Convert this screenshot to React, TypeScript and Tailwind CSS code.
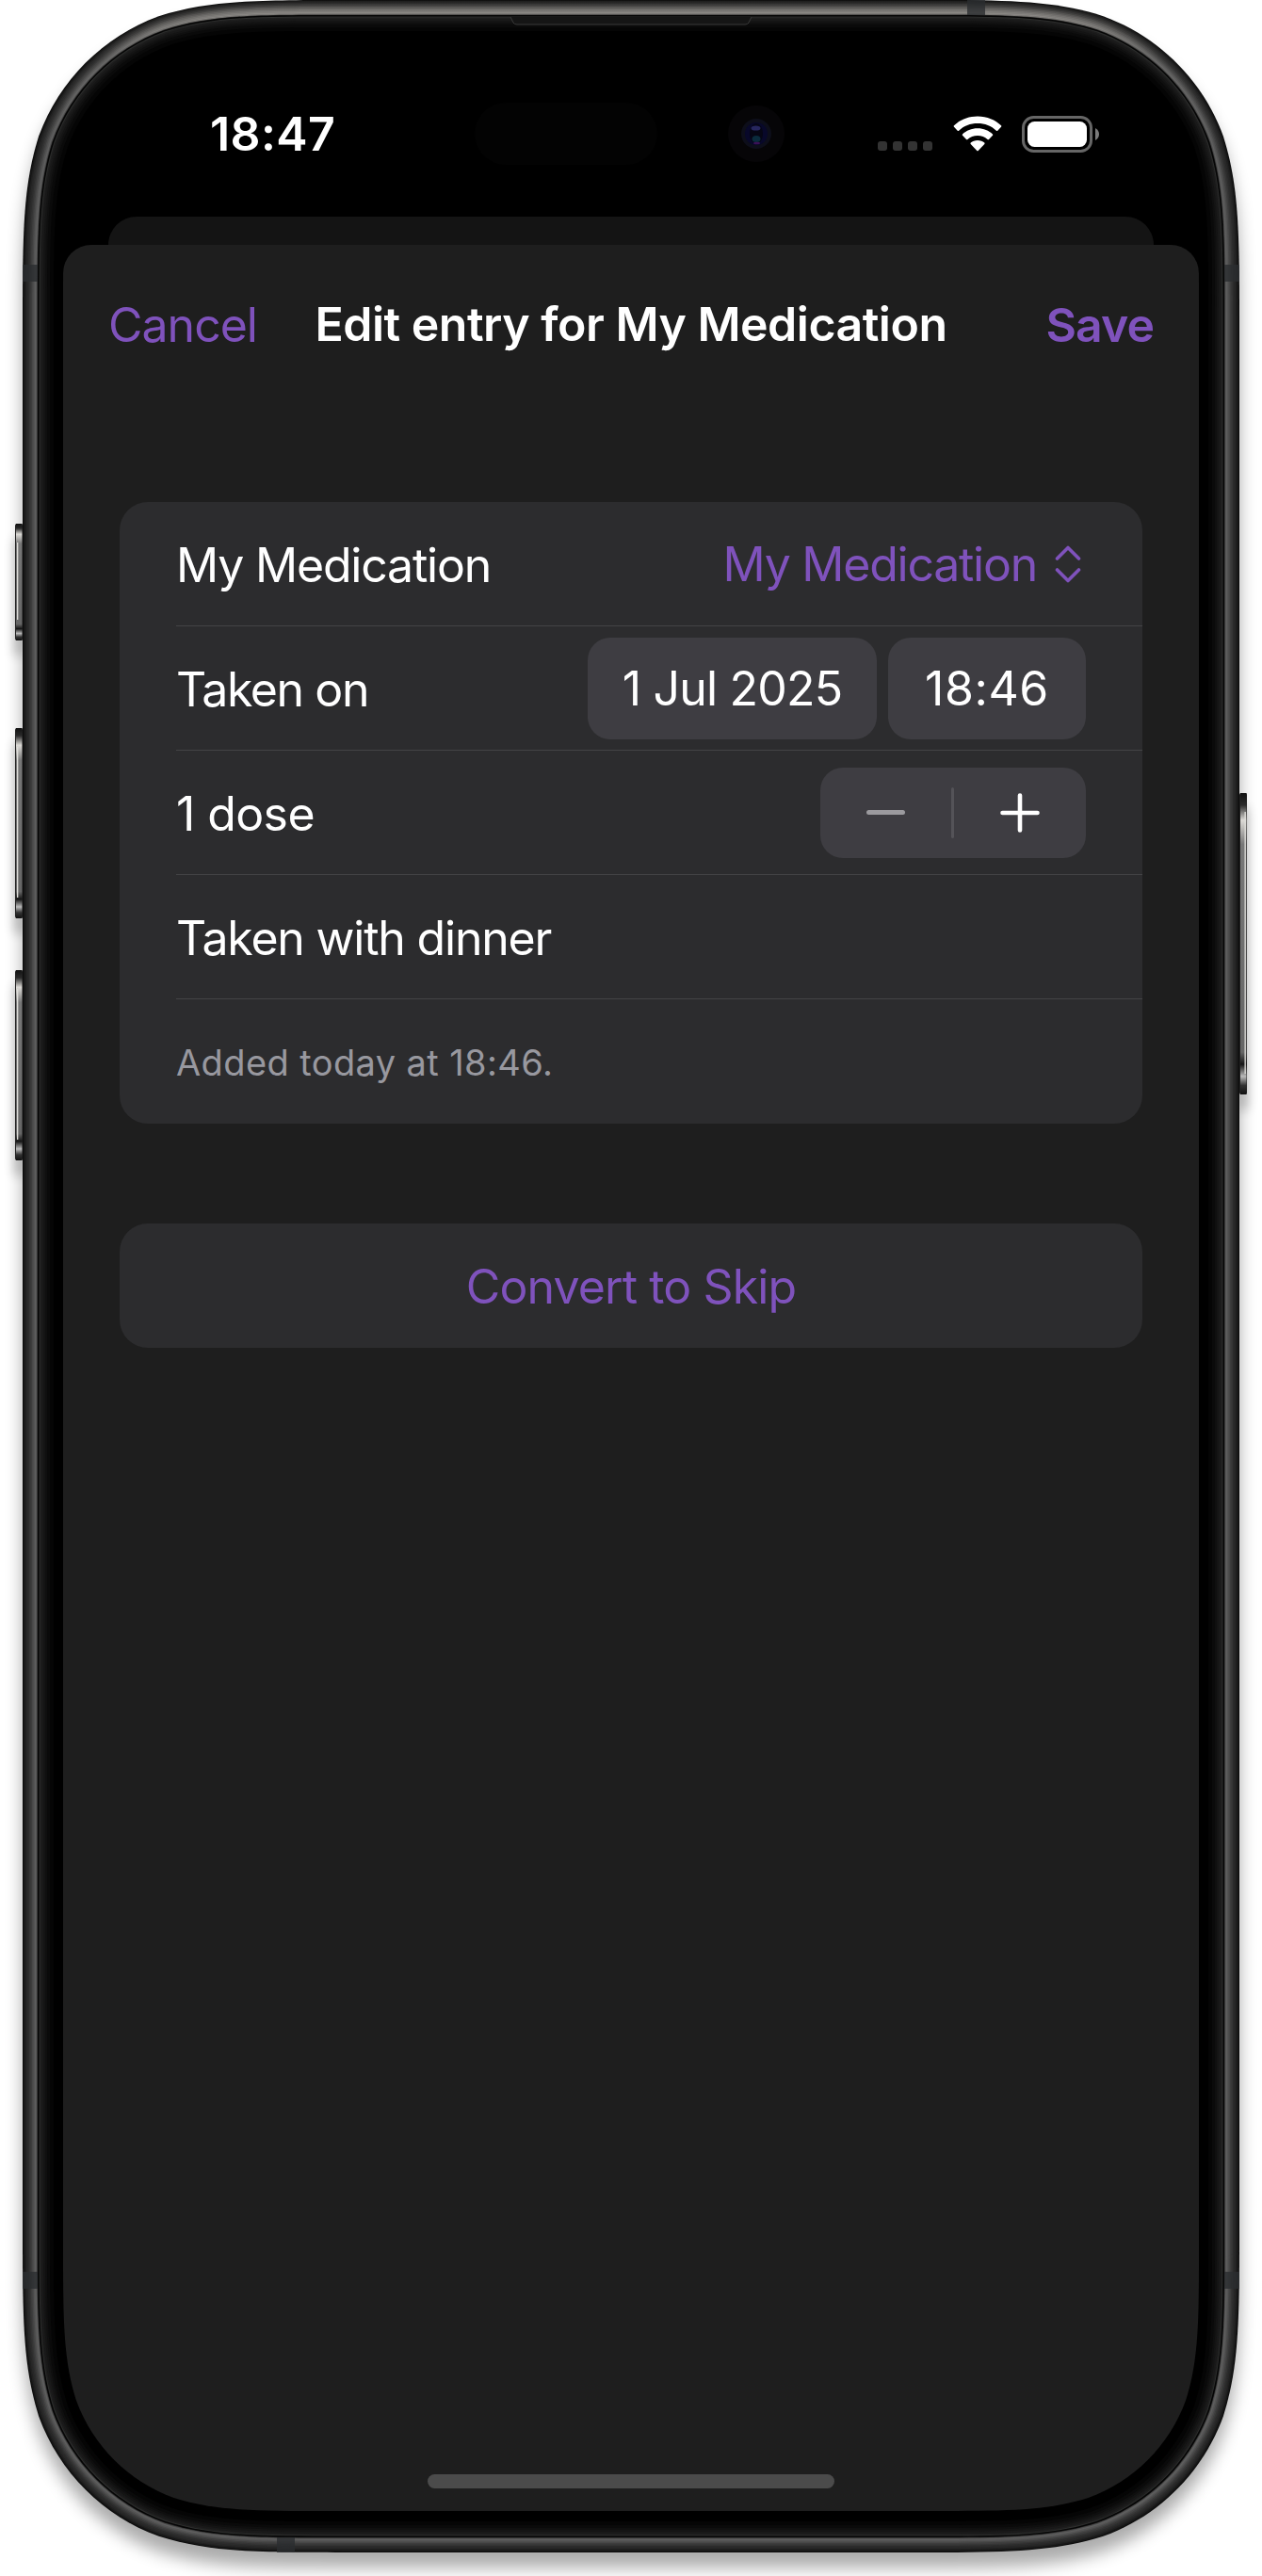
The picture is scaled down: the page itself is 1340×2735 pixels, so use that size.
import { useState } from "react";
import type { ReactNode } from "react";

// continuous ("squircle") rounded rectangle, as used by the device outline
const squircle = (x: number, y: number, w: number, h: number, r: number) => {
  const a = 1.52866498 * r;
  const b = 1.08849296 * r;
  const c = 0.86840694 * r;
  const d = 0.63149379 * r;
  const e = 0.07491139 * r;
  const f = 0.37282383 * r;
  const g = 0.16905956 * r;
  const R = x + w;
  const B = y + h;
  return [
    `M${x + a} ${y}L${R - a} ${y}`,
    `C${R - b} ${y} ${R - c} ${y} ${R - d} ${y + e}`,
    `C${R - f} ${y + g} ${R - g} ${y + f} ${R - e} ${y + d}`,
    `C${R} ${y + c} ${R} ${y + b} ${R} ${y + a}`,
    `L${R} ${B - a}`,
    `C${R} ${B - b} ${R} ${B - c} ${R - e} ${B - d}`,
    `C${R - g} ${B - f} ${R - f} ${B - g} ${R - d} ${B - e}`,
    `C${R - c} ${B} ${R - b} ${B} ${R - a} ${B}`,
    `L${x + a} ${B}`,
    `C${x + b} ${B} ${x + c} ${B} ${x + d} ${B - e}`,
    `C${x + f} ${B - g} ${x + g} ${B - f} ${x + e} ${B - d}`,
    `C${x} ${B - c} ${x} ${B - b} ${x} ${B - a}`,
    `L${x} ${y + a}`,
    `C${x} ${y + b} ${x} ${y + c} ${x + e} ${y + d}`,
    `C${x + g} ${y + f} ${x + f} ${y + g} ${x + d} ${y + e}`,
    `C${x + c} ${y} ${x + b} ${y} ${x + a} ${y}Z`,
  ].join("");
};

const body = (inset: number) =>
  squircle(24 + inset, inset, 1292 - inset * 2, 2710 - inset * 2, 229 - inset);

// metal rim from the outside in: inset, colour, strength of the light from above
const rim: [number, string, number][] = [
  [0, "#0c0c0c", 0.03],
  [1, "#161616", 0.06],
  [2.5, "#202020", 0.08],
  [4, "#272727", 0.12],
  [5.5, "#2c2c2c", 0.2],
  [7, "#343434", 0.3],
  [8.5, "#3d3d3d", 0.38],
  [10, "#484848", 0.45],
  [11.5, "#545454", 0.5],
  [13, "#5e5e5e", 0.55],
  [14.5, "#4c4c4c", 0.5],
  [15.5, "#242424", 0.1],
];

const glass: [number, string][] = [
  [16, "#050505"],
  [17.5, "#2c2d2c"],
  [18.5, "#1e1e1e"],
  [20, "#191919"],
  [22, "#141414"],
  [24, "#0f0f0f"],
  [26, "#0a0a0a"],
  [29, "#050505"],
  [33, "#000000"],
];

const sideButtons = [
  { x: 16, y: 556, h: 124 },
  { x: 16, y: 773, h: 202 },
  { x: 16, y: 1030, h: 202 },
  { x: 1316, y: 842, h: 320 },
];

const bands = [
  { x: 24, y: 281, w: 16, h: 18 },
  { x: 1300, y: 281, w: 16, h: 18 },
  { x: 24, y: 2412, w: 16, h: 18 },
  { x: 1300, y: 2412, w: 16, h: 18 },
  { x: 1027, y: 0, w: 19, h: 16 },
  { x: 294, y: 2694, w: 19, h: 16 },
];

const DeviceFrame = () => (
  <svg
    className="absolute inset-0"
    width="1340"
    height="2735"
    viewBox="0 0 1340 2735"
    fill="none"
  >
    <defs>
      <filter id="soft" x="-10%" y="-5%" width="120%" height="110%">
        <feGaussianBlur stdDeviation="9" />
      </filter>
      <filter id="softSmall" x="-300%" y="-20%" width="700%" height="140%">
        <feGaussianBlur stdDeviation="6" />
      </filter>
      <linearGradient id="topLight" x1="0" y1="0" x2="0" y2="160" gradientUnits="userSpaceOnUse">
        <stop offset="0" stopColor="#b4afa8" />
        <stop offset="0.1" stopColor="#b4afa8" stopOpacity="0.9" />
        <stop offset="0.4" stopColor="#b4afa8" stopOpacity="0.2" />
        <stop offset="1" stopColor="#b4afa8" stopOpacity="0" />
      </linearGradient>
      <linearGradient id="cap" x1="0" y1="0" x2="0" y2="1">
        <stop offset="0" stopColor="#111" />
        <stop offset="0.04" stopColor="#2a2a2a" />
        <stop offset="0.09" stopColor="#dcdad6" />
        <stop offset="0.17" stopColor="#777" />
        <stop offset="0.86" stopColor="#666" />
        <stop offset="0.9" stopColor="#151515" />
        <stop offset="0.94" stopColor="#bbb" />
        <stop offset="0.97" stopColor="#333" />
        <stop offset="1" stopColor="#111" />
      </linearGradient>
    </defs>

    <path d={squircle(24, 16, 1292, 2710, 229)} fill="#000" opacity="0.33" filter="url(#soft)" />
    {sideButtons.map((b) => (
      <g key={b.y}>
        <rect
          x={b.x}
          y={b.y + 16}
          width="8"
          height={b.h}
          fill="#000"
          opacity="0.3"
          filter="url(#softSmall)"
        />
        <rect x={b.x} y={b.y} width="8" height={b.h} rx="2" fill="#222" />
        <rect x={b.x + 1} y={b.y} width="6.5" height={b.h} fill="url(#cap)" />
        <rect
          x={b.x < 100 ? b.x + 2 : b.x + 5.5}
          y={b.y + 20}
          width="1.3"
          height={b.h - 42}
          fill="#deddd9"
        />
      </g>
    ))}

    {rim.map(([inset, color, light]) => (
      <g key={inset}>
        <path d={body(inset)} fill={color} />
        <path d={body(inset)} fill="url(#topLight)" opacity={light} />
      </g>
    ))}
    {bands.map((b) => (
      <rect key={`${b.x}-${b.y}`} x={b.x} y={b.y} width={b.w} height={b.h} fill="#2b2d2f" opacity="0.8" />
    ))}
    {glass.map(([inset, color]) => (
      <path key={inset} d={body(inset)} fill={color} />
    ))}

    {/* earpiece */}
    <path d="M542 18L545 24Q546 26 549 26H791Q794 26 795 24L798 18Z" fill="#151515" />
    <path d="M542 18L545 24Q546 26 549 26H791Q794 26 795 24L798 18" stroke="#3a3a3a" />
  </svg>
);

const WifiIcon = () => (
  <svg width="52" height="38" viewBox="0 0 52 38" fill="#fff">
    <path d="M26 0.5C36 0.5 45 4.300 51 10.300Q51.700 11 51 11.700L47.300 15.700Q46.600 16.300 45.900 15.700C40.500 10.600 33.800 8 26 8S11.500 10.600 6.100 15.700Q5.400 16.300 4.700 15.700L1 11.700Q0.300 11 1 10.300C7 4.300 16 0.500 26 0.500Z" />
    <path d="M26 13.200C32.500 13.200 38 15.600 42 19.400Q42.600 20.100 42 20.800L38 24.900Q37.300 25.500 36.600 24.900C33.700 22.300 30.200 21 26 21S18.300 22.300 15.400 24.900Q14.700 25.500 14 24.900L10 20.800Q9.400 20.100 10 19.400C14 15.600 19.500 13.200 26 13.200Z" />
    <path d="M26 26C29 26 31.500 26.900 33.300 28.500Q33.900 29.200 33.300 29.900L26.700 36.900Q26 37.600 25.300 36.900L18.700 29.900Q18.100 29.200 18.700 28.500C20.500 26.900 23 26 26 26Z" />
  </svg>
);

const BatteryIcon = () => (
  <svg width="82" height="39" viewBox="0 0 82 39" fill="none">
    <rect x="1.500" y="1.500" width="72" height="36" rx="11" stroke="#666" strokeWidth="3" />
    <rect x="6" y="6" width="63" height="27" rx="7.500" fill="#fff" />
    <path d="M78 13C80.500 14.200 82 16.700 82 19.500S80.500 24.800 78 26Z" fill="#7a7a7a" />
  </svg>
);

const ChevronUpDown = () => (
  <svg
    width="28"
    height="40"
    viewBox="0 0 28 40"
    fill="none"
    stroke="#7f52bc"
    strokeWidth="3.600"
    strokeLinecap="round"
    strokeLinejoin="round"
  >
    <path d="M2.500 14L14 2.500L25.500 14M2.500 26L14 37.500L25.500 26" />
  </svg>
);

const CameraLens = () => (
  <svg width="32" height="32" viewBox="0 0 32 32">
    <circle cx="16" cy="16" r="16" fill="#0d0e1a" />
    <circle cx="16" cy="16" r="12" fill="#08082a" />
    <ellipse cx="16" cy="16" rx="7" ry="11" fill="#060614" />
    <ellipse cx="15.500" cy="10" rx="5" ry="2.600" fill="#26265e" />
    <ellipse cx="16" cy="21.500" rx="4.500" ry="3.500" fill="#0a2b3c" />
    <ellipse cx="16.500" cy="26" rx="3.500" ry="1.300" fill="#3a1055" />
  </svg>
);

const StatusBar = () => (
  <div className="flex h-[186px] items-center pt-[10px] pr-[106px] pl-[156px]">
    <span className="w-[281px] text-[50px] font-semibold tracking-[0.4px]">18:47</span>
    <div className="h-[66px] w-[194px] rounded-full bg-[#030303]" />
    <div className="ml-[75px] flex size-[60px] items-center justify-center rounded-full bg-[#060507]">
      <CameraLens />
    </div>
    <div className="ml-auto flex items-center">
      <div className="mt-[26px] flex gap-[6px]">
        <i className="size-[10px] rounded-[3px] bg-[#333]" />
        <i className="size-[10px] rounded-[3px] bg-[#333]" />
        <i className="size-[10px] rounded-[3px] bg-[#333]" />
        <i className="size-[10px] rounded-[3px] bg-[#333]" />
      </div>
      <div className="ml-[22px]">
        <WifiIcon />
      </div>
      <div className="ml-[21px]">
        <BatteryIcon />
      </div>
    </div>
  </div>
);

type RowProps = {
  label: string;
  labelClass?: string;
  last?: boolean;
  children?: ReactNode;
};

const Row = ({
  label,
  labelClass = "text-[50px] tracking-[-1.2px] text-white",
  last,
  children,
}: RowProps) => (
  <div
    className={`ml-[60px] flex h-[132px] items-center justify-between pr-[60px] ${
      last ? "" : "border-b border-[#434345]"
    }`}
  >
    <span className={`pt-[2px] ${labelClass}`}>{label}</span>
    {children}
  </div>
);

const App = () => {
  const [doses, setDoses] = useState(1);

  return (
    <div className="relative h-[2735px] w-[1340px] overflow-hidden bg-white font-['Inter',sans-serif] leading-none whitespace-nowrap text-white">
      <DeviceFrame />
      <div className="relative flex px-[67px] pt-11">
        <div
          className="flex h-[2622px] w-[1206px] flex-col bg-black"
          style={{ clipPath: `path("${squircle(0, 0, 1206, 2622, 186)}")` }}
        >
          <StatusBar />
          <div className="mx-12 h-[30px] rounded-t-[30px] bg-[#141414]" />
          <div className="flex flex-1 flex-col rounded-t-[30px] bg-[#1e1e1e]">
            <header className="flex h-[168px] items-center justify-between px-12">
              <button className="w-[150px] pt-px text-left text-[50px] tracking-[-1px] text-[#7f52bc]">
                Cancel
              </button>
              <h1 className="text-[50px] font-semibold tracking-[-0.5px]">
                Edit entry for My Medication
              </h1>
              <button className="w-[150px] pt-px text-right text-[50px] font-semibold tracking-[-1px] text-[#7f52bc]">
                Save
              </button>
            </header>

            <section className="mx-[60px] mt-[105px] rounded-[30px] bg-[#2c2c2e]">
              <Row label="My Medication">
                <button className="flex items-center gap-[19px] pr-[5px] text-[50px] tracking-[-1.25px] text-[#7f52bc]">
                  My Medication
                  <ChevronUpDown />
                </button>
              </Row>
              <Row label="Taken on" labelClass="text-[50px] tracking-[-1.4px] text-white">
                <div className="flex gap-3 text-[50px]">
                  <button className="h-[108px] w-[307px] rounded-[24px] bg-[#3e3d42] pt-px tracking-[-0.8px]">
                    1 Jul 2025
                  </button>
                  <button className="h-[108px] w-[210px] rounded-[24px] bg-[#3e3d42] pt-px tracking-[0.6px]">
                    18:46
                  </button>
                </div>
              </Row>
              <Row label={`${doses} dose`} labelClass="text-[50px] tracking-[-0.6px] text-white">
                <div className="flex h-24 w-[282px] items-center rounded-[24px] bg-[#3e3d42]">
                  <button
                    className="flex h-full w-[139px] items-center justify-center"
                    onClick={() => setDoses(Math.max(1, doses - 1))}
                  >
                    <span className="h-[5px] w-[41px] rounded-full bg-[#9b9a9e]" />
                  </button>
                  <div className="h-[54px] w-[3px] rounded-full bg-[#545358]" />
                  <button
                    className="flex h-full flex-1 items-center justify-center"
                    onClick={() => setDoses(doses + 1)}
                  >
                    <svg
                      width="42"
                      height="42"
                      viewBox="0 0 42 42"
                      stroke="#fff"
                      strokeWidth="4.600"
                      strokeLinecap="round"
                    >
                      <path d="M2.500 21H39.500M21 2.500V39.500" />
                    </svg>
                  </button>
                </div>
              </Row>
              <Row label="Taken with dinner" />
              <Row
                label="Added today at 18:46."
                labelClass="text-[38px] tracking-[0.4px] text-[#98989f]"
                last
              />
            </section>

            <button className="mx-[60px] mt-[106px] h-[132px] rounded-[30px] bg-[#2c2c2e] pt-[2px] text-[50px] tracking-[-0.9px] text-[#7f52bc]">
              Convert to Skip
            </button>

            <div className="mx-auto mt-auto mb-6 h-[15px] w-[432px] rounded-full bg-[#4b4b4b]" />
          </div>
        </div>
      </div>
    </div>
  );
};

export default App;
